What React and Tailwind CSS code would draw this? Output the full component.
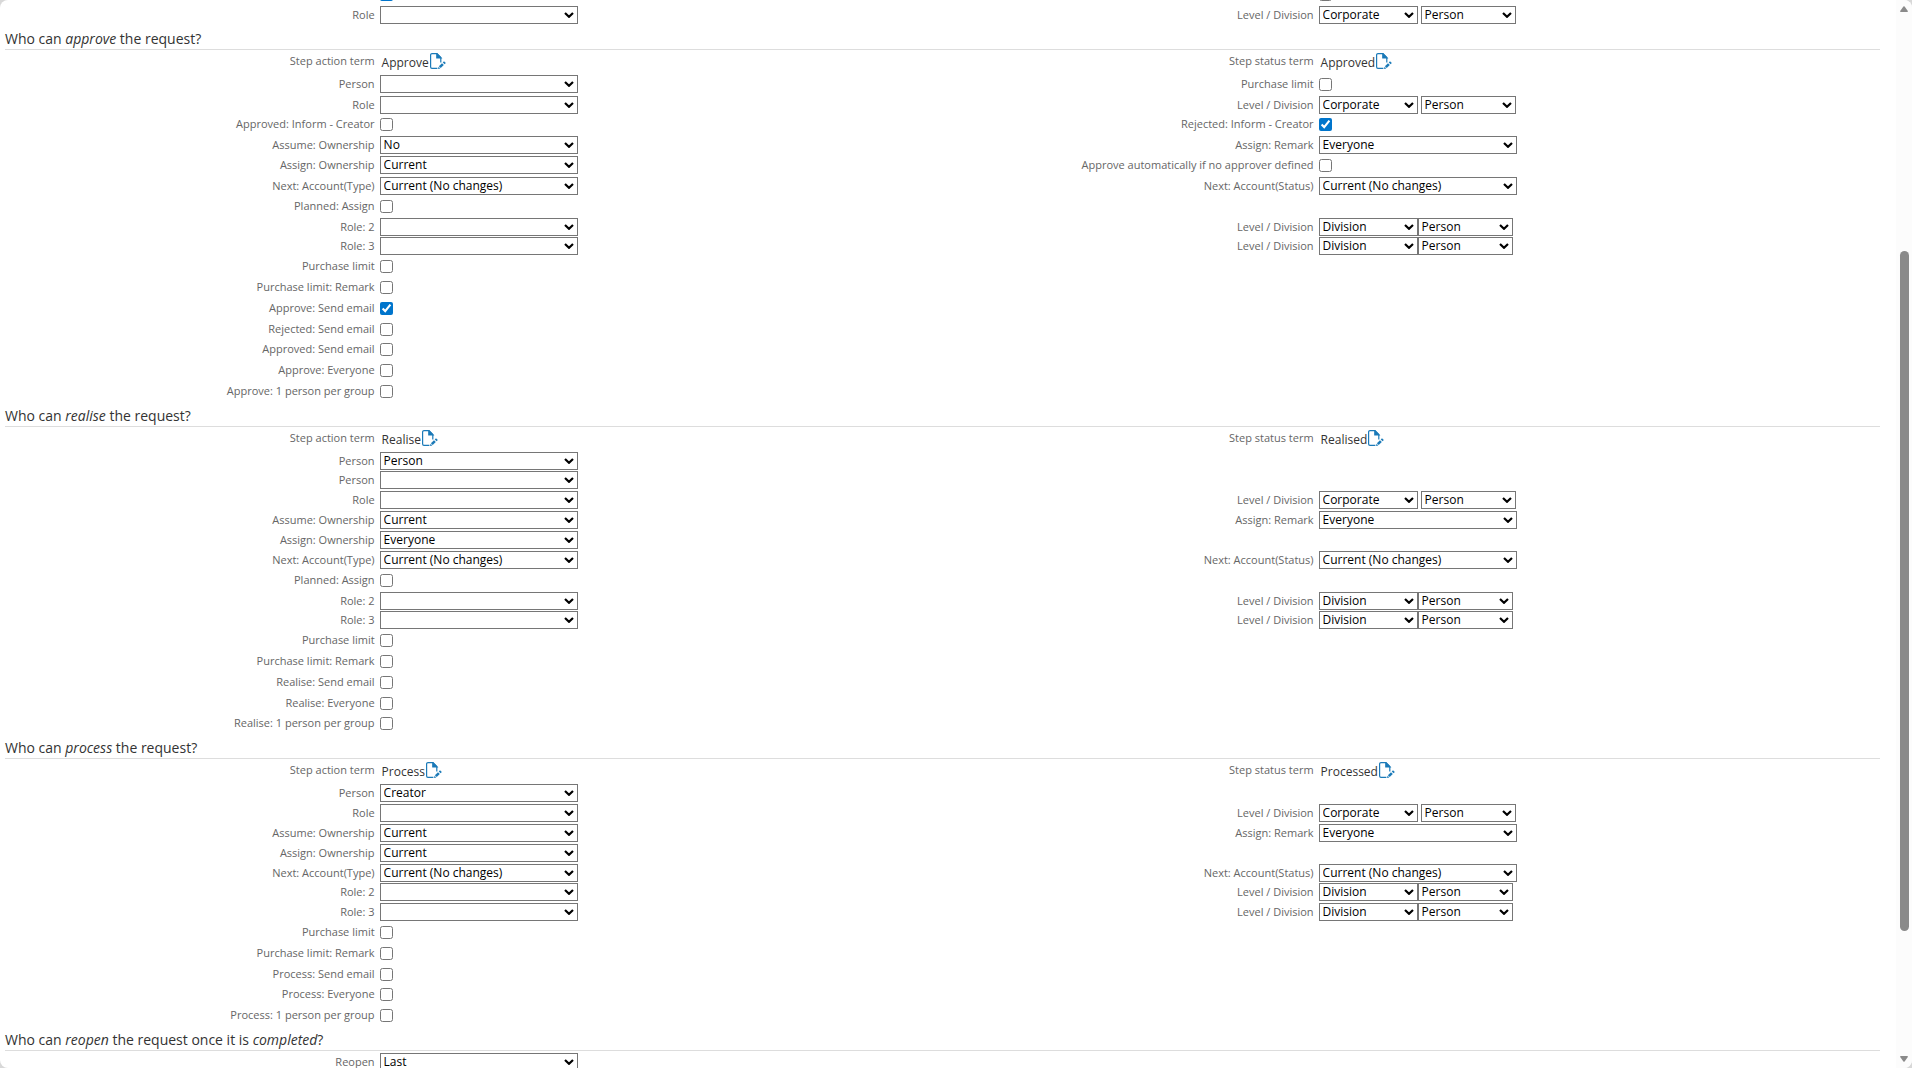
import { useId } from 'react';

// Row heights: t = tight, n = normal, l = loose
const ROW_HEIGHT = { t: 'h-[19px]', n: 'h-5', l: 'h-[21px]' };

const sel = (label, value = '') => ({ label, type: 'select', value });
const chk = (label, checked = false) => ({ label, type: 'check', checked });
const pair = (level, joined = false) => ({ label: 'Level / Division', type: 'pair', value: level, joined });

const SECTIONS = [
  {
    key: 'create',
    rows: [
      ['l', chk('', true), chk('')],
      ['n', sel('Role'), pair('Corporate')],
    ],
  },
  {
    key: 'approve',
    title: <>Who can <i>approve</i> the request?</>,
    terms: ['Approve', 'Approved'],
    rows: [
      ['l', sel('Person'), chk('Purchase limit')],
      ['t', sel('Role'), pair('Corporate')],
      ['l', chk('Approved: Inform - Creator'), chk('Rejected: Inform - Creator', true)],
      ['n', sel('Assume: Ownership', 'No'), sel('Assign: Remark', 'Everyone')],
      ['l', sel('Assign: Ownership', 'Current'), chk('Approve automatically if no approver defined')],
      ['n', sel('Next: Account(Type)', 'Current (No changes)'), sel('Next: Account(Status)', 'Current (No changes)')],
      ['l', chk('Planned: Assign')],
      ['t', sel('Role: 2'), pair('Division', true)],
      ['n', sel('Role: 3'), pair('Division', true)],
      ['l', chk('Purchase limit')],
      ['l', chk('Purchase limit: Remark')],
      ['l', chk('Approve: Send email', true)],
      ['n', chk('Rejected: Send email')],
      ['l', chk('Approved: Send email')],
      ['l', chk('Approve: Everyone')],
      ['l', chk('Approve: 1 person per group')],
    ],
  },
  {
    key: 'realise',
    title: <>Who can <i>realise</i> the request?</>,
    terms: ['Realise', 'Realised'],
    rows: [
      ['t', sel('Person', 'Person')],
      ['n', sel('Person')],
      ['n', sel('Role'), pair('Corporate')],
      ['n', sel('Assume: Ownership', 'Current'), sel('Assign: Remark', 'Everyone')],
      ['n', sel('Assign: Ownership', 'Everyone')],
      ['n', sel('Next: Account(Type)', 'Current (No changes)'), sel('Next: Account(Status)', 'Current (No changes)')],
      ['l', chk('Planned: Assign')],
      ['t', sel('Role: 2'), pair('Division', true)],
      ['n', sel('Role: 3'), pair('Division', true)],
      ['l', chk('Purchase limit')],
      ['l', chk('Purchase limit: Remark')],
      ['l', chk('Realise: Send email')],
      ['n', chk('Realise: Everyone')],
      ['l', chk('Realise: 1 person per group')],
    ],
  },
  {
    key: 'process',
    title: <>Who can <i>process</i> the request?</>,
    terms: ['Process', 'Processed'],
    rows: [
      ['n', sel('Person', 'Creator')],
      ['n', sel('Role'), pair('Corporate')],
      ['n', sel('Assume: Ownership', 'Current'), sel('Assign: Remark', 'Everyone')],
      ['n', sel('Assign: Ownership', 'Current')],
      ['t', sel('Next: Account(Type)', 'Current (No changes)'), sel('Next: Account(Status)', 'Current (No changes)')],
      ['n', sel('Role: 2'), pair('Division', true)],
      ['n', sel('Role: 3'), pair('Division', true)],
      ['l', chk('Purchase limit')],
      ['l', chk('Purchase limit: Remark')],
      ['n', chk('Process: Send email')],
      ['l', chk('Process: Everyone')],
      ['l', chk('Process: 1 person per group')],
    ],
  },
  {
    key: 'reopen',
    title: <>Who can <i>reopen</i> the request once it is <i>completed</i>?</>,
    rows: [['n', sel('Reopen', 'Last')]],
  },
];

function EditIcon() {
  return (
    <svg viewBox="0 0 16 16" width="16" height="16" fill="none" stroke="#1b7ab8" strokeWidth="1.2">
      <path d="M7.4 15.4H2A1.4 1.4 0 0 1 .6 14V2A1.4 1.4 0 0 1 2 .6h5l3.8 3.8v5.2" />
      <path d="M6.8.6 11 4.9H6.8z" fill="#1b7ab8" />
      <path d="m9.8 14.2 3.1-3.1" strokeWidth="2.6" />
      <path d="m13.7 10.3 1.2-1.2" strokeWidth="2.6" />
      <path d="m8 16 .6-2.3 1.7 1.7z" fill="#1b7ab8" stroke="none" />
    </svg>
  );
}

function Select({ id, value, label, className }) {
  return (
    <div className={`relative shrink-0 ${className}`}>
      <select
        id={id}
        aria-label={label}
        defaultValue={value}
        className="block h-[18px] w-full appearance-none border border-[#767676] bg-white pl-[3px] text-xs leading-4 text-black"
      >
        <option>{value}</option>
      </select>
      <svg
        viewBox="0 0 10 6"
        width="10"
        height="6"
        className="pointer-events-none absolute top-1.5 right-1"
        fill="none"
        stroke="#000"
        strokeWidth="2.2"
      >
        <path d="m1 1 4 3.8L9 1" />
      </svg>
    </div>
  );
}

function Control({ id, field }) {
  if (field.type === 'check') {
    return (
      <input
        id={id}
        type="checkbox"
        aria-label={field.label ? undefined : 'Inform'}
        defaultChecked={field.checked}
        className="h-[13px] w-[13px] accent-[#0075cc]"
      />
    );
  }
  if (field.type === 'pair') {
    return (
      <div className={field.joined ? 'flex' : 'flex gap-[3px]'}>
        <Select id={id} value={field.value} className="w-[99px]" />
        <Select value="Person" label="Division person" className="w-[95px]" />
      </div>
    );
  }
  return <Select id={id} value={field.value} className="w-[198px]" />;
}

function Field({ field }) {
  const id = useId();
  if (!field) return <div />;
  return (
    <div className="flex h-[18px] items-center gap-1">
      <label htmlFor={id} className="w-2/5 shrink-0 pr-px text-right text-[11px] leading-4 text-[#666]">
        {field.label}
      </label>
      <Control id={id} field={field} />
    </div>
  );
}

function Term({ label, value }) {
  return (
    <div className="flex items-start gap-1 pt-[3px]">
      <span className="w-2/5 shrink-0 pr-px text-right text-[11px] leading-4 text-[#666]">{label}</span>
      <div className="flex gap-px pl-0.5 text-xs leading-5 text-[#333]">
        {value}
        <button type="button" aria-label={`Edit ${value}`} className="h-4">
          <EditIcon />
        </button>
      </div>
    </div>
  );
}

function Section({ title, terms, rows }) {
  return (
    <section>
      {title && (
        <h2 className="ml-[5px] h-6 border-b border-[#ddd] text-[14px] leading-[26px] text-[#333]">{title}</h2>
      )}
      <div className="mr-0.5">
        {terms ? (
          <div className="grid h-[25px] grid-cols-2">
            <Term label="Step action term" value={terms[0]} />
            <Term label="Step status term" value={terms[1]} />
          </div>
        ) : (
          title && <div className="h-0.5" />
        )}
        {rows.map(([size, left, right], i) => (
          <div key={i} className={`grid grid-cols-2 ${ROW_HEIGHT[size]}`}>
            <Field field={left} />
            <Field field={right} />
          </div>
        ))}
      </div>
    </section>
  );
}

function Scrollbar() {
  return (
    <div className="flex w-4 shrink-0 flex-col items-center bg-[#fcfcfc]" aria-hidden="true">
      <svg viewBox="0 0 8 6" width="8" height="6" className="mt-1.5" fill="#8a8a8a">
        <path d="M3.4.6a.8.8 0 0 1 1.2 0L8 5.2 7.4 6H.6L0 5.2z" />
      </svg>
      <div className="flex min-h-0 w-full grow flex-col items-center">
        <div className="grow-239 basis-0" />
        <div className="w-[9px] grow-680 basis-0 rounded-full bg-[#8a8a8a]" />
        <div className="grow-125 basis-0" />
      </div>
      <svg viewBox="0 0 8 6" width="8" height="6" className="mb-1.5" fill="#8a8a8a">
        <path d="M3.4 5.4a.8.8 0 0 0 1.2 0L8 .8 7.4 0H.6L0 .8z" />
      </svg>
    </div>
  );
}

export default function App() {
  return (
    <div className="h-screen bg-[#d8d8d8] font-['Open_Sans',sans-serif]">
      <div className="flex h-full overflow-hidden rounded-lg bg-white">
        <main className="min-w-0 grow overflow-hidden pr-4">
          <form className="-mt-[15px]">
            {SECTIONS.map(({ key, ...section }) => (
              <Section key={key} {...section} />
            ))}
          </form>
        </main>
        <Scrollbar />
      </div>
    </div>
  );
}
